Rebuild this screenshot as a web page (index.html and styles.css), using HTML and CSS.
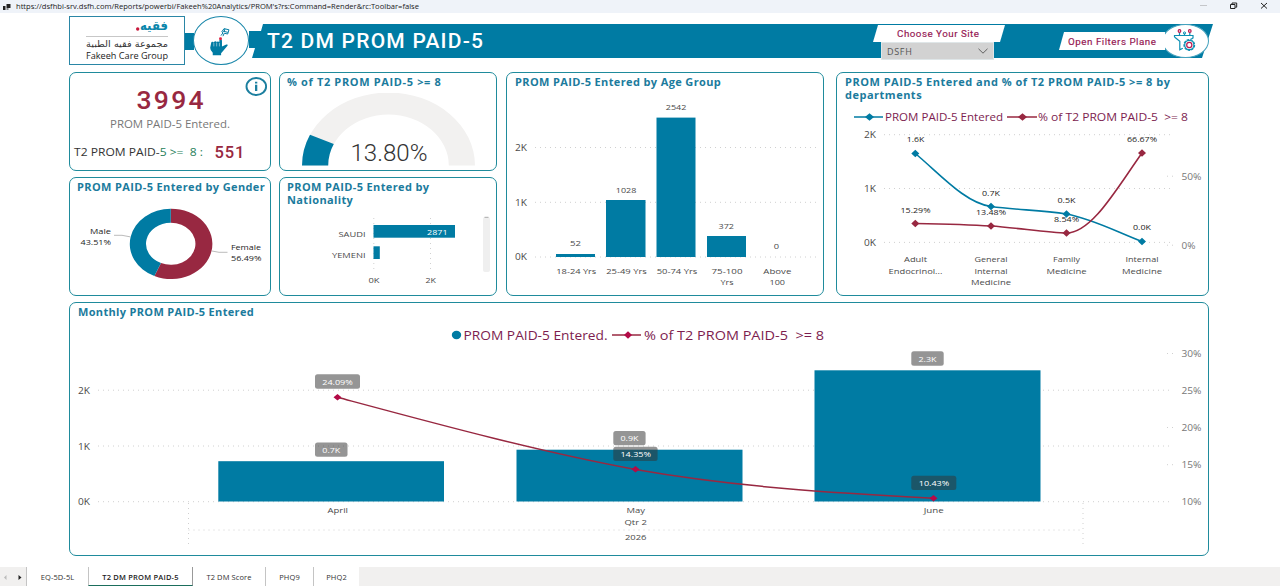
FILE: index.html
```html
<!DOCTYPE html>
<html lang="en">
<head>
  <meta charset="UTF-8" />
  <title>T2 DM PROM PAID-5</title>
  <meta name="viewport" content="width=device-width, initial-scale=1.0" />
  <link rel="stylesheet" href="styles.css">
</head>
<body>

  <div class="titlebar">
    <svg class="app-icon" viewBox="0 0 10 8"><path d="M1 3h2.500v4H1zM4.500 1h4v4h-4zM4.500 5.500h2v1h-2z" fill="#222"/></svg>
    <svg class="url" viewBox="0 0 410 13"><text x="0" y="9" textLength="403" lengthAdjust="spacingAndGlyphs">https://dsfhbi-srv.dsfh.com/Reports/powerbi/Fakeeh%20Analytics/PROM's?rs:Command=Render&amp;rc:Toolbar=false</text></svg>
    <svg class="window-buttons" viewBox="1195 0 75 13">
      <path d="M1200 5.500h7" stroke="#c4c6ca"/>
      <path d="M1230.500 4.500h4.500v4h-4.500zM1232 4.300v-1.300h4.700v4.200h-1.400" stroke="#222" fill="none"/>
      <path d="M1261 3l6 5.500M1267 3l-6 5.500" stroke="#222"/>
    </svg>
  </div>

  <header class="header">
    <div class="logo">
      <svg viewBox="70 18 115 46">
        <text class="logo-name" x="168" y="31" text-anchor="end" textLength="28" lengthAdjust="spacingAndGlyphs">فقيه</text>
        <circle cx="137.700" cy="30" r="1.700" fill="#c8193c"/>
        <path d="M86 37.500h82" stroke="#b9b9b9" stroke-width=".8"/>
        <text class="logo-ar" x="168" y="48" text-anchor="end" textLength="82" lengthAdjust="spacingAndGlyphs">مجموعة فقيه الطبية</text>
        <text class="logo-en" x="86" y="59.500" textLength="82" lengthAdjust="spacingAndGlyphs">Fakeeh Care Group</text>
      </svg>
    </div>
    <div class="connector"></div>
    <div class="emblem">
      <svg viewBox="193 16 57 49">
        <path d="M211.500 43q0-1.300 1.300-1.300t1.400 1.200q0-1.700 1.500-1.700t1.400 1.500q.1-1.400 1.500-1.300t1.200 1.400V40.500q.2-1.300 1.400-1.300t1.300 1.500v6l4.400-2.200q2.200-.3 1.200 1.300l-4.500 5.400-2 2.200v2.200h-8.500v-2.700q-2.600-2-2.600-5z" fill="#007ba3"/>
        <path d="M214.200 43v3.500M217.100 43v3.500M219.900 43v3.500" stroke="#fff" stroke-width=".5"/>
        <circle cx="221" cy="38.800" r="1.500" fill="#e02040"/>
        <path d="M221.500 35.500l2-2.800-1.200-1 2.300-3.300 5 1.200-1.300 4.300-3.500-.8-1.300 3M223.500 31l5 1.200M225.500 28.800l-.6 2" fill="none" stroke="#007ba3" stroke-width="1"/>
      </svg>
    </div>
    <div class="banner">
      <svg class="banner-title" viewBox="0 0 240 34"><text x="0" y="24.300" textLength="216">T2 DM PROM PAID-5</text></svg>
      <div class="site">
        <div class="site-label"><svg viewBox="0 0 132 18"><text x="24" y="12.800" textLength="82">Choose Your Site</text></svg></div>
        <div class="site-select">
          <span>DSFH</span>
          <svg viewBox="0 0 10 6"><path d="M.5 .8L5 5.200 9.500 .8" fill="none" stroke="#555" stroke-width=".9"/></svg>
        </div>
      </div>
      <div class="filters"><svg viewBox="0 0 106 18"><text x="9" y="13" textLength="88">Open Filters Plane</text></svg></div>
      <div class="filter-icon">
        <svg viewBox="1163 24 47 34">
          <g fill="none" stroke="#0b8fb3" stroke-width="1.200">
            <path d="M1175.500 37v-1.500h18.500V38q-1 .8-2.500 1.300M1175.500 37l5.300 4.300v8.400l3-1.500"/>
            <path d="M1185.500 35v-1.500M1180.500 35.500v-3M1190.800 35.500v-3"/>
            <circle cx="1190.300" cy="45" r="5.300" stroke-dasharray="2.600 1"/>
            <circle cx="1190.300" cy="45" r="4.600"/>
          </g>
          <g fill="none" stroke="#bc1a50" stroke-width="1.200">
            <circle cx="1190.300" cy="45" r="2.600"/>
            <circle cx="1180.500" cy="31" r="1.300"/>
            <circle cx="1190.800" cy="31" r="1.300"/>
          </g>
          <circle cx="1185.500" cy="33" r="1.100" fill="none" stroke="#0b8fb3"/>
        </svg>
      </div>
    </div>
  </header>

  <main class="report">
    <div class="top-row">
      <div class="stack stack-totals">
        <section class="card card-short">
          <svg class="chart" viewBox="70 73 200 97">
            <text class="kpi-big" x="136.500" y="109" textLength="67">3994</text>
            <text class="kpi-caption" x="110" y="128" textLength="120" lengthAdjust="spacingAndGlyphs">PROM PAID-5 Entered.</text>
            <text class="kpi-line" x="74" y="155.500" textLength="129" lengthAdjust="spacingAndGlyphs" xml:space="preserve">T2 PROM PAID-<tspan class="green">5 &gt;=  8 :</tspan></text>
            <text class="kpi-small" x="214.500" y="158" textLength="30">551</text>
            <ellipse cx="256.300" cy="86.500" rx="9.800" ry="8.500" fill="#fff" stroke="#1c7f9f" stroke-width="1.900"/>
            <path d="M255 84.800h2.300v6.200H255zM255 81.800h2.300v1.800H255z" fill="#1c7f9f"/>
          </svg>
        </section>
        <section class="card card-tall">
          <h2 class="card-title title-gender">PROM PAID-5 Entered by Gender</h2>
          <svg class="chart" viewBox="70 198 200 96">
            <path d="M170.800 208.700A41.300 35.200 0 1 1 154.400 276.100L161 263.100A24.700 21 0 1 0 170.800 222.800Z" fill="#982841"/>
            <path d="M154.400 276.100A41.300 35.200 0 0 1 170.800 208.700V222.800A24.700 21 0 0 0 161 263.100Z" fill="#007ba3"/>
            <path d="M114 235.300h8l8 1.500M212 251l7 1.300h8.500" fill="none" stroke="#aaa" stroke-width=".8"/>
            <g class="label dark">
              <text x="90" y="234" textLength="21" lengthAdjust="spacingAndGlyphs">Male</text>
              <text x="80.500" y="245" textLength="30.500" lengthAdjust="spacingAndGlyphs">43.51%</text>
              <text x="231" y="250" textLength="30" lengthAdjust="spacingAndGlyphs">Female</text>
              <text x="231" y="261" textLength="30.500" lengthAdjust="spacingAndGlyphs">56.49%</text>
            </g>
          </svg>
        </section>
      </div>

      <div class="stack stack-rates">
        <section class="card card-short">
          <h2 class="card-title title-rate">% of T2 PROM PAID-5 &gt;= 8</h2>
          <svg class="chart" viewBox="280 93 216 77">
            <path d="M302 165.500A86.500 73 0 0 1 475 165.500H448.800A60.300 51 0 0 0 328.200 165.500Z" fill="#f2f1f0"/>
            <path d="M302 165.500A86.500 73 0 0 1 310 134.800L333.800 144.100A60.300 51 0 0 0 328.200 165.500Z" fill="#007ba3"/>
            <text class="gauge-value" x="350.500" y="161" textLength="77" lengthAdjust="spacingAndGlyphs">13.80%</text>
          </svg>
        </section>
        <section class="card card-tall">
          <h2 class="card-title two-lines title-nation">PROM PAID-5 Entered by<br>Nationality</h2>
          <svg class="chart" viewBox="280 212 216 82">
            <path class="grid" d="M373.800 218V273M430.500 218V273"/>
            <rect x="373.500" y="225" width="81.500" height="12.700" fill="#007ba3"/>
            <rect x="373.500" y="246.300" width="6.300" height="12.700" fill="#007ba3"/>
            <g class="label">
              <text x="338.500" y="237" textLength="27" lengthAdjust="spacingAndGlyphs">SAUDI</text>
              <text x="332" y="258" textLength="33.500" lengthAdjust="spacingAndGlyphs">YEMENI</text>
              <text class="white" x="427" y="234.500" textLength="20.500" lengthAdjust="spacingAndGlyphs">2871</text>
              <text x="368.500" y="283" textLength="11" lengthAdjust="spacingAndGlyphs">0K</text>
              <text x="425.500" y="283" textLength="10.500" lengthAdjust="spacingAndGlyphs">2K</text>
            </g>
            <rect x="483" y="217" width="7" height="55" rx="2" fill="#efefef"/>
            <path d="M484.500 217.300h4" stroke="#999" stroke-width=".8"/>
          </svg>
        </section>
      </div>

      <section class="card card-age">
        <h2 class="card-title title-age">PROM PAID-5 Entered by Age Group</h2>
        <svg class="chart" viewBox="507 93 316 201">
          <path class="grid" d="M535 147.500H817M535 202.300H817M535 257H817"/>
          <g fill="#007ba3">
            <rect x="556" y="254" width="39" height="3"/>
            <rect x="606" y="200" width="39.500" height="57"/>
            <rect x="656.500" y="117.600" width="39" height="139.400"/>
            <rect x="707" y="236" width="39" height="21"/>
          </g>
          <g class="axis">
            <text x="515" y="151" textLength="12" lengthAdjust="spacingAndGlyphs">2K</text>
            <text x="515" y="205.700" textLength="12" lengthAdjust="spacingAndGlyphs">1K</text>
            <text x="515" y="260.300" textLength="12" lengthAdjust="spacingAndGlyphs">0K</text>
          </g>
          <g class="label mid">
            <text x="575.500" y="246.300" textLength="11" lengthAdjust="spacingAndGlyphs">52</text>
            <text x="626" y="192.800" textLength="20.500" lengthAdjust="spacingAndGlyphs">1028</text>
            <text x="676" y="110.300" textLength="20.500" lengthAdjust="spacingAndGlyphs">2542</text>
            <text x="726.300" y="228.800" textLength="15.500" lengthAdjust="spacingAndGlyphs">372</text>
            <text x="776.500" y="249.200" textLength="5.300" lengthAdjust="spacingAndGlyphs">0</text>
            <text x="576.300" y="274" textLength="40" lengthAdjust="spacingAndGlyphs">18-24 Yrs</text>
            <text x="626.500" y="274" textLength="40.500" lengthAdjust="spacingAndGlyphs">25-49 Yrs</text>
            <text x="677" y="274" textLength="40.500" lengthAdjust="spacingAndGlyphs">50-74 Yrs</text>
            <text x="727" y="274" textLength="31" lengthAdjust="spacingAndGlyphs">75-100</text>
            <text x="727" y="285.300" textLength="13" lengthAdjust="spacingAndGlyphs">Yrs</text>
            <text x="777.300" y="274" textLength="28" lengthAdjust="spacingAndGlyphs">Above</text>
            <text x="777.300" y="285.300" textLength="15.500" lengthAdjust="spacingAndGlyphs">100</text>
          </g>
        </svg>
      </section>

      <section class="card card-dept">
        <h2 class="card-title two-lines title-dept">PROM PAID-5 Entered and % of T2 PROM PAID-5 &gt;= 8 by<br>departments</h2>
        <svg class="chart" viewBox="837 107 371 187">
          <path d="M854 117h29" stroke="#007ba3" stroke-width="1.700"/>
          <path d="M869.500 113.300l4.500 3.700-4.500 3.700-4.500-3.700z" fill="#007ba3"/>
          <path d="M1007 117h30" stroke="#982841" stroke-width="1.700"/>
          <path d="M1022.500 113.300l4.500 3.700-4.500 3.700-4.500-3.700z" fill="#982841"/>
          <g class="legend">
            <text x="885" y="121" textLength="118" lengthAdjust="spacingAndGlyphs">PROM PAID-5 Entered</text>
            <text x="1038" y="121" textLength="150" lengthAdjust="spacingAndGlyphs" xml:space="preserve">% of T2 PROM PAID-5  &gt;= 8</text>
          </g>
          <path class="grid" d="M884 134.700H1172M884 188.500H1172M884 242.400H1172M1167 176.200H1175M1167 245.200H1175"/>
          <path d="M915.300 153.500C940 174 965 203 991 206.500S1041 210 1066.500 214C1093 219 1117 232 1142 241.500" fill="none" stroke="#007ba3" stroke-width="1.600"/>
          <path d="M915.300 223.500C941 224 966 224.500 991 226S1048 233 1066.500 233C1092 233 1117 188 1142 153" fill="none" stroke="#982841" stroke-width="1.600"/>
          <path d="M915.300 149.800l4 3.700-4 3.700-4-3.700zM991 202.800l4 3.700-4 3.700-4-3.700zM1066.500 210.300l4 3.700-4 3.700-4-3.700zM1142 237.800l4 3.700-4 3.700-4-3.700z" fill="#007ba3"/>
          <path d="M915.300 219.800l4 3.700-4 3.700-4-3.700zM991 222.300l4 3.700-4 3.700-4-3.700zM1066.500 229.300l4 3.700-4 3.700-4-3.700zM1142 149.300l4 3.700-4 3.700-4-3.700z" fill="#982841"/>
          <g class="axis">
            <text x="864" y="138" textLength="12" lengthAdjust="spacingAndGlyphs">2K</text>
            <text x="864" y="192" textLength="12" lengthAdjust="spacingAndGlyphs">1K</text>
            <text x="864" y="245.500" textLength="12" lengthAdjust="spacingAndGlyphs">0K</text>
            <text class="grey" x="1181.500" y="179.500" textLength="20" lengthAdjust="spacingAndGlyphs">50%</text>
            <text class="grey" x="1181.500" y="248.500" textLength="14" lengthAdjust="spacingAndGlyphs">0%</text>
          </g>
          <g class="label dark mid">
            <text x="915.500" y="142" textLength="17.500" lengthAdjust="spacingAndGlyphs">1.6K</text>
            <text x="991" y="195.700" textLength="18" lengthAdjust="spacingAndGlyphs">0.7K</text>
            <text x="1066.500" y="203" textLength="18" lengthAdjust="spacingAndGlyphs">0.5K</text>
            <text x="1142" y="230.300" textLength="18" lengthAdjust="spacingAndGlyphs">0.0K</text>
            <text x="915.500" y="212.800" textLength="30" lengthAdjust="spacingAndGlyphs">15.29%</text>
            <text x="991" y="215" textLength="30" lengthAdjust="spacingAndGlyphs">13.48%</text>
            <text x="1066.500" y="222" textLength="25" lengthAdjust="spacingAndGlyphs">8.54%</text>
            <text x="1142" y="142" textLength="30" lengthAdjust="spacingAndGlyphs">66.67%</text>
          </g>
          <g class="label mid">
            <text x="915.500" y="262" textLength="23" lengthAdjust="spacingAndGlyphs">Adult</text>
            <text x="915.500" y="274" textLength="54" lengthAdjust="spacingAndGlyphs">Endocrinol...</text>
            <text x="991" y="262" textLength="33" lengthAdjust="spacingAndGlyphs">General</text>
            <text x="991" y="274" textLength="33" lengthAdjust="spacingAndGlyphs">Internal</text>
            <text x="991" y="285.300" textLength="40" lengthAdjust="spacingAndGlyphs">Medicine</text>
            <text x="1066.500" y="262" textLength="27" lengthAdjust="spacingAndGlyphs">Family</text>
            <text x="1066.500" y="274" textLength="40" lengthAdjust="spacingAndGlyphs">Medicine</text>
            <text x="1142" y="262" textLength="33" lengthAdjust="spacingAndGlyphs">Internal</text>
            <text x="1142" y="274" textLength="40" lengthAdjust="spacingAndGlyphs">Medicine</text>
          </g>
        </svg>
      </section>
    </div>

    <section class="card card-monthly">
      <h2 class="card-title title-monthly">Monthly PROM PAID-5 Entered</h2>
      <svg class="chart" viewBox="70 323 1138 232">
        <ellipse cx="456.500" cy="335" rx="4.700" ry="4.200" fill="#007ba3"/>
        <path d="M612 335h29" stroke="#982841" stroke-width="1.700"/>
        <path d="M628 331.300l4 3.700-4 3.700-4-3.700z" fill="#b30b47"/>
        <g class="legend legend-big">
          <text x="463.500" y="339.700" textLength="144" lengthAdjust="spacingAndGlyphs">PROM PAID-5 Entered.</text>
          <text x="644" y="339.700" textLength="180" lengthAdjust="spacingAndGlyphs" xml:space="preserve">% of T2 PROM PAID-5  &gt;= 8</text>
        </g>
        <path class="grid" d="M98 390.200H1173M98 446H1173M98 501.700H1173M1167 353.500H1175M1167 427.500H1175M1167 464.700H1175M188.500 530H1083M188.500 503V548M1083 503V548"/>
        <g fill="#007ba3">
          <rect x="218.300" y="461.200" width="225.700" height="40.300"/>
          <rect x="516.500" y="449.700" width="226" height="51.800"/>
          <rect x="814.500" y="370.300" width="226" height="131.200"/>
        </g>
        <path d="M337.500 397.300C437 424 536 451 635.500 469.500C735 487 834 493 933.500 498.300" fill="none" stroke="#982841" stroke-width="1.500"/>
        <path d="M337.500 394l4 3.300-4 3.300-4-3.300zM635.500 466l4 3.300-4 3.300-4-3.300zM933.500 495l4 3.300-4 3.300-4-3.300z" fill="#b30b47"/>
        <g class="pill">
          <rect x="315" y="374.300" width="45" height="14.500" rx="2.500"/>
          <rect x="315" y="442.500" width="32.500" height="14.300" rx="2.500"/>
          <rect x="613.300" y="431" width="32.300" height="14.300" rx="2.500"/>
          <rect x="613.300" y="446.800" width="44.300" height="14.200" rx="2.500"/>
          <rect x="911.300" y="351.300" width="32.400" height="14.500" rx="2.500"/>
          <rect x="911.300" y="475.700" width="45" height="14.300" rx="2.500"/>
        </g>
        <g class="label white mid">
          <text x="337.500" y="384.500" textLength="30.500" lengthAdjust="spacingAndGlyphs">24.09%</text>
          <text x="331.300" y="452.500" textLength="18" lengthAdjust="spacingAndGlyphs">0.7K</text>
          <text x="629.500" y="441" textLength="18" lengthAdjust="spacingAndGlyphs">0.9K</text>
          <text x="635.700" y="457" textLength="30.500" lengthAdjust="spacingAndGlyphs">14.35%</text>
          <text x="927.500" y="361.500" textLength="18" lengthAdjust="spacingAndGlyphs">2.3K</text>
          <text x="934" y="486" textLength="30.500" lengthAdjust="spacingAndGlyphs">10.43%</text>
        </g>
        <g class="axis">
          <text x="78" y="393.500" textLength="12" lengthAdjust="spacingAndGlyphs">2K</text>
          <text x="78" y="449.500" textLength="12" lengthAdjust="spacingAndGlyphs">1K</text>
          <text x="78" y="505" textLength="12" lengthAdjust="spacingAndGlyphs">0K</text>
          <g class="grey">
            <text x="1181.500" y="357" textLength="20" lengthAdjust="spacingAndGlyphs">30%</text>
            <text x="1181.500" y="394" textLength="20" lengthAdjust="spacingAndGlyphs">25%</text>
            <text x="1181.500" y="431" textLength="20" lengthAdjust="spacingAndGlyphs">20%</text>
            <text x="1181.500" y="468" textLength="20" lengthAdjust="spacingAndGlyphs">15%</text>
            <text x="1181.500" y="505" textLength="20" lengthAdjust="spacingAndGlyphs">10%</text>
          </g>
        </g>
        <g class="label mid">
          <text x="337.700" y="513" textLength="20.500" lengthAdjust="spacingAndGlyphs">April</text>
          <text x="635.700" y="513" textLength="18.500" lengthAdjust="spacingAndGlyphs">May</text>
          <text x="933.700" y="513" textLength="20" lengthAdjust="spacingAndGlyphs">June</text>
          <text x="635.700" y="525" textLength="22.500" lengthAdjust="spacingAndGlyphs">Qtr 2</text>
          <text x="635.700" y="540.300" textLength="21.500" lengthAdjust="spacingAndGlyphs">2026</text>
        </g>
      </svg>
    </section>
  </main>

  <nav class="tabs">
    <div class="tab-arrows">
      <svg viewBox="0 0 26 19"><path d="M6.500 8v5L4 10.500z" fill="#bbb"/><path d="M18.500 8v5l3-2.500z" fill="#222"/></svg>
    </div>
    <div class="tab tab-eq">EQ-5D-5L</div>
    <div class="tab tab-paid active">T2 DM PROM PAID-5</div>
    <div class="tab tab-score">T2 DM Score</div>
    <div class="tab tab-phq9">PHQ9</div>
    <div class="tab tab-phq2">PHQ2</div>
  </nav>

</body>
</html>
```
FILE: styles.css
```css
* {
  box-sizing: border-box;
}

body {
  margin: 0;
  width: 1280px;
  height: 586px;
  overflow: hidden;
  background: #fff;
  font-family: "Open Sans", "Noto Sans", sans-serif;
  color: #444;
  display: flex;
  flex-direction: column;
}

svg {
  display: block;
}

/* window title bar */
.titlebar {
  height: 13px;
  background: #eff3f9;
  display: flex;
  align-items: center;
}

.app-icon {
  width: 10px;
  height: 8px;
  margin: 0 4px 0 2px;
}

.url {
  width: 410px;
  height: 13px;
  font-size: 7.5px;
  fill: #222;
}

.window-buttons {
  width: 75px;
  height: 13px;
  margin-left: auto;
  margin-right: 10px;
}

/* report header */
.header {
  display: flex;
  padding: 3px 0 0 69px;
  height: 59px;
}

.logo {
  width: 116px;
  height: 49px;
  border: 1px solid #2a86a6;
}

.logo svg {
  width: 115px;
  height: 46px;
}

.logo-name {
  font: bold 13px "DejaVu Sans", sans-serif;
  fill: #0b86ab;
}

.logo-ar {
  font: 9px "DejaVu Sans", sans-serif;
  fill: #333;
}

.logo-en {
  font: 8.3px "Open Sans", sans-serif;
  fill: #222;
}

.connector {
  width: 9px;
  height: 17px;
  margin: 17px -1px 0 0;
  background: #007ba3;
}

.emblem {
  width: 56px;
  height: 49px;
  border: 1px solid #1a87aa;
  border-radius: 50%;
  background: #fff;
}

.emblem svg {
  width: 56px;
  height: 49px;
  margin: -1px;
}

.banner {
  position: relative;
  width: 964px;
  height: 34px;
  margin-top: 8px;
  display: flex;
}

.banner::before {
  content: "";
  position: absolute;
  inset: 0;
  z-index: -1;
  background: #007ba3;
  clip-path: polygon(14px 0, 100% 0, 953px 100%, 3px 100%, 6px 24px, 0 24px, 0 7px, 12px 7px);
}

.banner-title {
  width: 240px;
  height: 34px;
  margin-left: 18px;
  font: 500 21px Roboto, sans-serif;
  fill: #fff;
}

.site {
  width: 132px;
  margin-left: 366px;
}

.site-label {
  height: 18px;
  background: #fff;
  clip-path: polygon(5px 1px, 100% 1px, 127px 100%, 0 100%);
}

.site-label svg {
  width: 132px;
  height: 18px;
}

.site-label text,
.filters text {
  font: 9.8px Roboto, sans-serif;
  fill: #941651;
  stroke: #941651;
  stroke-width: .15;
}

.site-select {
  width: 113px;
  height: 18px;
  margin-left: 8px;
  padding: 0 5px 0 5px;
  border: 1px solid #dfe6e8;
  background: #d2d2d2;
  color: #555;
  font-size: 9px;
  line-height: 15px;
  letter-spacing: .7px;
  display: flex;
  align-items: center;
  justify-content: space-between;
}

.site-select svg {
  width: 10px;
  height: 6px;
}

.filters {
  width: 106px;
  height: 18px;
  margin: 8px 0 0 54px;
  background: #fff;
  clip-path: polygon(5px 0, 100% 0, 100% 100%, 0 100%);
}

.filters svg {
  width: 106px;
  height: 18px;
}

.filter-icon {
  width: 47px;
  height: 34px;
  margin-left: -3px;
  border: 1px solid #43a1bd;
  border-radius: 50%;
  background: #fff;
}

.filter-icon svg {
  width: 47px;
  height: 34px;
  margin: -1px;
}

/* cards */
.report {
  padding-left: 69px;
}

.top-row {
  display: flex;
}

.stack {
  display: flex;
  flex-direction: column;
  justify-content: space-between;
}

.stack-totals {
  width: 202px;
}

.stack-rates {
  width: 218px;
  margin-left: 8px;
}

.card {
  border: 1px solid #1f8b9c;
  border-radius: 7px;
  background: #fff;
  overflow: hidden;
}

.card-short {
  height: 99px;
}

.card-tall {
  height: 119px;
}

.card-age {
  width: 318px;
  height: 224px;
  margin-left: 9px;
}

.card-dept {
  width: 373px;
  height: 224px;
  margin-left: 12px;
}

.card-monthly {
  width: 1140px;
  height: 254px;
  margin-top: 6px;
}

.card-title {
  margin: 0;
  height: 20px;
  padding: 2px 0 0 8px;
  color: #1b7b9d;
  font-size: 11px;
  line-height: 13px;
  font-weight: bold;
  letter-spacing: .37px;
  white-space: nowrap;
}

.card-title.two-lines {
  height: 34px;
}

.title-gender,
.title-rate,
.title-nation {
  padding-left: 7px;
}

.title-rate {
  letter-spacing: .64px;
}

.title-dept {
  letter-spacing: .5px;
}

.title-monthly {
  letter-spacing: .33px;
}

.chart {
  width: 100%;
}

.grid {
  fill: none;
  stroke: #d0d0d0;
  stroke-width: 1;
  stroke-dasharray: 1 4;
}

/* chart text */
.label {
  font-size: 8px;
  fill: #4a4a4a;
}

.axis {
  font-size: 9px;
  fill: #4a4a4a;
}

.mid {
  text-anchor: middle;
}

.dark {
  fill: #252423;
}

.grey {
  fill: #777;
}

.white {
  fill: #fff;
}

.legend {
  font-size: 11px;
  fill: #7d1d4f;
}

.legend-big {
  font-size: 12.5px;
}

.pill rect {
  fill: #333;
  fill-opacity: .52;
}

.kpi-big {
  font: 500 26.5px Roboto, sans-serif;
  fill: #982841;
}

.kpi-small {
  font: 500 16.5px Roboto, sans-serif;
  fill: #982841;
}

.kpi-caption {
  font-size: 10.5px;
  fill: #777;
}

.kpi-line {
  font-size: 10.5px;
  fill: #333;
}

.green {
  fill: #27805a;
}

.gauge-value {
  font: 300 24.5px Roboto, sans-serif;
  fill: #333;
}

/* sheet tabs */
.tabs {
  height: 19px;
  margin-top: auto;
  display: flex;
  background: #f1f0ef;
}

.tab-arrows,
.tab-arrows svg {
  width: 26px;
  height: 19px;
}

.tab {
  border-left: 1px solid #c4c4c4;
  background: #fff;
  font-size: 7.5px;
  line-height: 21px;
  letter-spacing: .1px;
  text-align: center;
  color: #333;
}

.tab.active {
  border-right: 1px solid #999;
  border-bottom: 1px solid #1b6e5c;
  font-weight: 600;
  letter-spacing: .2px;
  color: #222;
}

.tab-eq {
  width: 62px;
}

.tab-paid {
  width: 105px;
}

.tab-score {
  width: 72px;
  border-left: none;
}

.tab-phq9 {
  width: 48px;
}

.tab-phq2 {
  width: 46px;
}
```
